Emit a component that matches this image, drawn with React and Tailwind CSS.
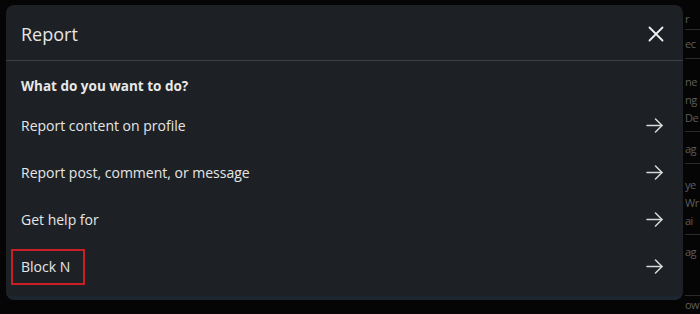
import React from 'react';

const options = [
  'Report content on profile',
  'Report post, comment, or message',
  'Get help for',
  'Block N',
];

const ArrowRight = () => (
  <svg width="17" height="17" viewBox="0 0 17 17" fill="none" stroke="#d9d9d9" strokeWidth="1.5" strokeLinecap="round" strokeLinejoin="round">
    <path d="M1 8.5h15" />
    <path d="M9.5 2l6.5 6.5-6.5 6.5" />
  </svg>
);

const CloseIcon = () => (
  <svg width="16" height="16" viewBox="0 0 16 16" fill="none" stroke="#f0f0f0" strokeWidth="1.8" strokeLinecap="round">
    <path d="M1.5 1.5l13 13M14.5 1.5l-13 13" />
  </svg>
);

export default function App() {
  return (
    <div
      className="w-[700px] h-[314px] bg-[#050505] overflow-hidden flex"
      style={{ fontFamily: '"Open Sans", "Noto Sans", Arial, sans-serif' }}
    >
      {/* left edge of page behind */}
      <div className="w-[6px] shrink-0" />

      {/* modal */}
      <div className="mt-[5px] w-[677px] h-[295px] shrink-0 bg-[#1d2125] rounded-lg border-b-[4px] border-[#1c2631] flex flex-col">
        <div className="h-[56px] flex items-center justify-between pt-[3px] pl-[15px] pr-[19px] border-b border-[#3b3f43]">
          <span className="text-[18px] text-[#e6e6e6]">Report</span>
          <CloseIcon />
        </div>

        <div className="pt-[15px] pl-[15px] pr-[20px]">
          <div className="text-[13.5px] font-bold text-[#e8e8e8] leading-[20px]">What do you want to do?</div>
          <div className="mt-[6px] flex flex-col">
            {options.map((label, i) => (
              <div key={i} className="h-[47px] flex items-center justify-between">
                {label === 'Block N' ? (
                  <span className="-ml-[10px] h-[36px] pl-[8px] pr-[13px] flex items-center border-2 border-[#c81e24] text-[14px] text-[#e6e6e6]">
                    {label}
                  </span>
                ) : (
                  <span className="text-[14px] text-[#e6e6e6]">{label}</span>
                )}
                <ArrowRight />
              </div>
            ))}
          </div>
        </div>
      </div>

      {/* page content peeking out on the right */}
      <div className="flex-1 flex flex-col text-[11px] text-[#5e5e5e] leading-[18px] pl-[2px] tracking-[-0.5px] whitespace-nowrap">
        <div className="h-[30px] pt-[10px]">r</div>
        <div className="h-[30px] border-t border-[#2a2a2a] pt-[5px]">ec</div>
        <div className="border-t border-[#2a2a2a] pt-[14px]">ne</div>
        <div>ng</div>
        <div>De</div>
        <div className="h-[34px] border-t border-[#2a2a2a] mt-[4px] pt-[8px]">ag</div>
        <div className="border-t border-[#2a2a2a] pt-[12px]">ye</div>
        <div>Wr</div>
        <div>ai</div>
        <div className="h-[34px] border-t border-[#2a2a2a] mt-[4px] pt-[8px]">ag</div>
        <div className="border-t border-[#2a2a2a] mt-[28px]">ow</div>
      </div>
    </div>
  );
}
